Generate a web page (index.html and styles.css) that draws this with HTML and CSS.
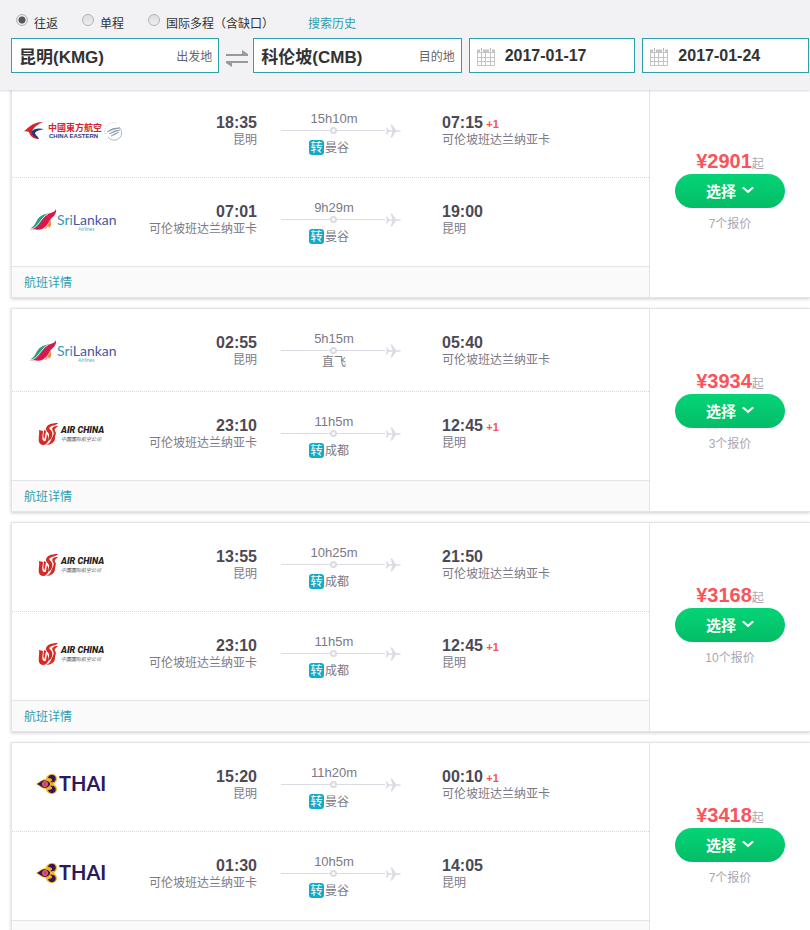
FILE: index.html
```
<!DOCTYPE html>
<html lang="zh-CN">
<head>
  <meta charset="UTF-8">
  <meta name="viewport" content="width=device-width, initial-scale=1.0">
  <title>昆明 - 科伦坡 机票</title>
  <link rel="stylesheet" href="styles.css">
</head>
<body>

  <!-- Shared icons and airline logos -->
  <svg class="sprite" aria-hidden="true">
    <symbol id="calendar" viewBox="0 0 18 18">
      <path d="M0 1.500H18V5H0Z" fill="#c4c4c4"/>
      <path d="M.5 4V17.500H17.500V4M0 9.500H18M0 13.500H18M4.500 5V18M8.500 5V18M13.500 5V18" fill="none" stroke="#c4c4c4"/>
      <path d="M3 0H6V4H3ZM12 0H15V4H12Z" fill="#fff"/>
      <path d="M4.500 0V3.500M13.500 0V3.500" stroke="#b4b4b4"/>
    </symbol>
    <symbol id="swap" viewBox="0 0 22 18">
      <path d="M0 5H16V1L22 5V7H0ZM22 14H6V18L0 14V12H22Z" fill="#999"/>
    </symbol>
    <symbol id="plane" viewBox="0 0 16 14">
      <path d="M1 3.500H2L4 6.200H7.500L5.500 .5H7L11 6.200H14Q16 6.200 16 7Q16 7.800 14 7.800H11L7 13.500H5.500L7.500 7.800H4L2 10.500H1L1.800 7Z" fill="#dcdae2"/>
    </symbol>
    <symbol id="chevron" viewBox="0 0 12 8">
      <path d="M1.500 2L6 5.800L10.500 2" fill="none" stroke="#fff" stroke-width="2.200" stroke-linecap="round"/>
    </symbol>

    <symbol id="china-eastern" viewBox="0 0 120 40">
      <path d="M11 21.500C15 20 19 12 31 12C26 14 22 17 20 21C21 25 24 27 27 29C21 29 18 26 17 22C15 21 13 21 11 21.500Z" fill="#d8232f"/>
      <path d="M32 19C27 18 22 18 19.500 21.500C20 25 23 28 27 29C26 26 23 25 23 23C25 20 29 20 32 19Z" fill="#1d3a80"/>
      <text class="ce-cn" x="36" y="21">中國東方航空</text>
      <text class="ce-en" x="37" y="28">CHINA EASTERN</text>
      <path d="M93 24A9 9 0 0 1 104 13" fill="none" stroke="#b8c2ce" stroke-dasharray="1 1.500"/>
      <path d="M96 27A7.500 7.500 0 1 0 107 17" fill="none" stroke="#a9b8c6"/>
      <path d="M95 22Q101 17 108 18Q101 19 95 22ZM97 24Q102 20 108 20Q102 22 97 24ZM99 26Q103 23 107 22Q103 25 99 26Z" fill="#8497a9" stroke="#8497a9" stroke-width=".5"/>
    </symbol>

    <symbol id="srilankan" viewBox="0 0 120 40">
      <path d="M14.500 31.500C24 30 26 23 31 18C35 14 43 14 44 10C45 16 40 18 38 21C35 27 31 32 24 30.500C21 30 18 31 14.500 31.500Z" fill="#d9184f"/>
      <path d="M18 29.500C24 27 24 20 29 17C32 15 35 15 37 14C30 19 29 26 23 29C21 30 20 29 18 29.500Z" fill="#2e9c7f"/>
      <path d="M18 30.500C27 28.500 28 19 36 15" fill="none" stroke="#fff" stroke-width=".8"/>
      <path d="M32 30C36 27 37 23 39 20C38 24 41 25 37 29C37 28 36 27 36 27C35 29 34 30 32 30Z" fill="#f08a3c"/>
      <text class="sl-name" x="45" y="26"><tspan fill="#3c93bf">Sri</tspan><tspan fill="#4a55a4">Lankan</tspan></text>
      <text class="sl-sub" x="66" y="32">Airlines</text>
    </symbol>

    <symbol id="air-china" viewBox="0 0 120 40">
      <g fill="#d62a24">
        <path d="M46 10C39 10 34 12 34 16C34 19 38 20 37 23L36 28C40 26 41 22 40 19C39 16 36 16 38 14C40 12 44 13 46 10Z"/>
        <path d="M46 13C41 13 39 15 41 18C43 21 40 24 39 27C38 30 36 31 34 32C39 32 43 29 43 25C43 22 45 20 43 18C42 16 44 15 46 13Z"/>
        <path d="M27 17L31 18C31 21 29 27 32 28C35 29 34 24 35 21C38 26 36 32 31 32C24 31 28 23 27 17Z"/>
        <path d="M32 17L34 18C34 21 32 24 33 26C30 25 32 21 32 17Z"/>
      </g>
      <text class="ac-en" x="49" y="20">AIR CHINA</text>
      <text class="ac-cn" x="49" y="28">中国国际航空公司</text>
    </symbol>

    <symbol id="thai" viewBox="0 0 120 40">
      <path d="M24 20C28 18 30 15 34 15C34 11 38 10 41 10C45 11 46 15 44 18L42 20L44 22C46 25 45 29 41 30C38 30 34 29 34 25C30 25 28 22 24 20Z" fill="#f0b51e"/>
      <path d="M25 20C29 18 31 15 35 17C39 18 39 22 35 23.500C31 25 29 22 25 20Z" fill="#3a1458"/>
      <path d="M36 14C37 10 42 10 43.500 13C45 18 40 19 38 18C41 17 41 14 36 14Z" fill="#3a1458"/>
      <path d="M36 26C37 30 42 30 43.500 27C45 22 40 21 38 22C41 23 41 26 36 26Z" fill="#3a1458"/>
      <circle cx="33" cy="20" r="2.600" fill="#d13a8c" stroke="#f0b51e" stroke-width=".6"/>
      <text class="th-name" x="47" y="27">THAI</text>
    </symbol>
  </svg>

  <form class="search">
    <div class="trip-types">
      <label><input type="radio" name="trip" checked> <span>往返</span></label>
      <label><input type="radio" name="trip"> <span>单程</span></label>
      <label><input type="radio" name="trip"> <span>国际多程（含缺口）</span></label>
      <a class="history" href="#">搜索历史</a>
    </div>
    <div class="fields">
      <div class="field place">
        <input type="text" id="from" value="昆明(KMG)">
        <label for="from">出发地</label>
      </div>
      <button type="button" class="swap" aria-label="交换"><svg><use href="#swap"/></svg></button>
      <div class="field place">
        <input type="text" id="to" value="科伦坡(CMB)">
        <label for="to">目的地</label>
      </div>
      <div class="field date">
        <label for="depart" aria-label="出发日期"><svg><use href="#calendar"/></svg></label>
        <input type="text" id="depart" value="2017-01-17">
      </div>
      <div class="field date">
        <label for="return" aria-label="返回日期"><svg><use href="#calendar"/></svg></label>
        <input type="text" id="return" value="2017-01-24">
      </div>
    </div>
  </form>

  <main class="results">
    <article class="card">
      <div class="flights">
        <div class="leg">
          <svg class="logo"><use href="#china-eastern"/></svg>
          <div class="depart"><strong>18:35</strong><p>昆明</p></div>
          <div class="route">
            <p>15h10m</p>
            <div class="track"><i></i><svg><use href="#plane"/></svg></div>
            <p class="stop"><b>转</b>曼谷</p>
          </div>
          <div class="arrive"><strong>07:15</strong> <em>+1</em><p>可伦坡班达兰纳亚卡</p></div>
        </div>
        <div class="leg">
          <svg class="logo"><use href="#srilankan"/></svg>
          <div class="depart"><strong>07:01</strong><p>可伦坡班达兰纳亚卡</p></div>
          <div class="route">
            <p>9h29m</p>
            <div class="track"><i></i><svg><use href="#plane"/></svg></div>
            <p class="stop"><b>转</b>曼谷</p>
          </div>
          <div class="arrive"><strong>19:00</strong><p>昆明</p></div>
        </div>
        <div class="details"><a href="#">航班详情</a></div>
      </div>
      <div class="offer">
        <p class="price"><strong>¥2901</strong>起</p>
        <button type="button" class="select">选择 <svg><use href="#chevron"/></svg></button>
        <p class="quotes">7个报价</p>
      </div>
    </article>

    <article class="card">
      <div class="flights">
        <div class="leg">
          <svg class="logo"><use href="#srilankan"/></svg>
          <div class="depart"><strong>02:55</strong><p>昆明</p></div>
          <div class="route">
            <p>5h15m</p>
            <div class="track"><i></i><svg><use href="#plane"/></svg></div>
            <p class="direct">直飞</p>
          </div>
          <div class="arrive"><strong>05:40</strong><p>可伦坡班达兰纳亚卡</p></div>
        </div>
        <div class="leg">
          <svg class="logo"><use href="#air-china"/></svg>
          <div class="depart"><strong>23:10</strong><p>可伦坡班达兰纳亚卡</p></div>
          <div class="route">
            <p>11h5m</p>
            <div class="track"><i></i><svg><use href="#plane"/></svg></div>
            <p class="stop"><b>转</b>成都</p>
          </div>
          <div class="arrive"><strong>12:45</strong> <em>+1</em><p>昆明</p></div>
        </div>
        <div class="details"><a href="#">航班详情</a></div>
      </div>
      <div class="offer">
        <p class="price"><strong>¥3934</strong>起</p>
        <button type="button" class="select">选择 <svg><use href="#chevron"/></svg></button>
        <p class="quotes">3个报价</p>
      </div>
    </article>

    <article class="card">
      <div class="flights">
        <div class="leg">
          <svg class="logo"><use href="#air-china"/></svg>
          <div class="depart"><strong>13:55</strong><p>昆明</p></div>
          <div class="route">
            <p>10h25m</p>
            <div class="track"><i></i><svg><use href="#plane"/></svg></div>
            <p class="stop"><b>转</b>成都</p>
          </div>
          <div class="arrive"><strong>21:50</strong><p>可伦坡班达兰纳亚卡</p></div>
        </div>
        <div class="leg">
          <svg class="logo"><use href="#air-china"/></svg>
          <div class="depart"><strong>23:10</strong><p>可伦坡班达兰纳亚卡</p></div>
          <div class="route">
            <p>11h5m</p>
            <div class="track"><i></i><svg><use href="#plane"/></svg></div>
            <p class="stop"><b>转</b>成都</p>
          </div>
          <div class="arrive"><strong>12:45</strong> <em>+1</em><p>昆明</p></div>
        </div>
        <div class="details"><a href="#">航班详情</a></div>
      </div>
      <div class="offer">
        <p class="price"><strong>¥3168</strong>起</p>
        <button type="button" class="select">选择 <svg><use href="#chevron"/></svg></button>
        <p class="quotes">10个报价</p>
      </div>
    </article>

    <article class="card">
      <div class="flights">
        <div class="leg">
          <svg class="logo"><use href="#thai"/></svg>
          <div class="depart"><strong>15:20</strong><p>昆明</p></div>
          <div class="route">
            <p>11h20m</p>
            <div class="track"><i></i><svg><use href="#plane"/></svg></div>
            <p class="stop"><b>转</b>曼谷</p>
          </div>
          <div class="arrive"><strong>00:10</strong> <em>+1</em><p>可伦坡班达兰纳亚卡</p></div>
        </div>
        <div class="leg">
          <svg class="logo"><use href="#thai"/></svg>
          <div class="depart"><strong>01:30</strong><p>可伦坡班达兰纳亚卡</p></div>
          <div class="route">
            <p>10h5m</p>
            <div class="track"><i></i><svg><use href="#plane"/></svg></div>
            <p class="stop"><b>转</b>曼谷</p>
          </div>
          <div class="arrive"><strong>14:05</strong><p>昆明</p></div>
        </div>
        <div class="details"><a href="#">航班详情</a></div>
      </div>
      <div class="offer">
        <p class="price"><strong>¥3418</strong>起</p>
        <button type="button" class="select">选择 <svg><use href="#chevron"/></svg></button>
        <p class="quotes">7个报价</p>
      </div>
    </article>
  </main>

</body>
</html>
```
FILE: styles.css
```
* {
  box-sizing: border-box;
}

html {
  scrollbar-width: none;
}

body {
  margin: 0;
  background-color: #fff;
  color: #7b7985;
  font-family: "Liberation Sans", "Noto Sans CJK SC", sans-serif;
  font-size: 12px;
  line-height: 16px;
}

p {
  margin: 0;
}

a {
  color: #2a9fae;
  text-decoration: none;
}

button,
input {
  font-family: inherit;
}

.sprite {
  display: none;
}

/* Search bar */
.search {
  position: sticky;
  top: 0;
  z-index: 1;
  padding: 13px 1px 17px 11px;
  background-color: #f2f2f4;
  box-shadow: 0 1px 2px rgba(60, 60, 90, 0.2);
}

.trip-types {
  display: flex;
  gap: 24px;
  padding-left: 5px;
  margin-bottom: 2px;
  line-height: 23px;
  color: #333;
}

.trip-types label {
  display: flex;
  gap: 6px;
}

.trip-types input {
  appearance: none;
  width: 12px;
  height: 12px;
  margin: 1px 0 0;
  border: 1px solid #b4b4b4;
  border-radius: 50%;
  background: linear-gradient(#dcdcdc, #efefef);
}

.trip-types input:checked {
  background: radial-gradient(circle, #555 0 3px, #e8e8e8 4px);
}

.history {
  margin-left: 10px;
}

.fields {
  display: grid;
  grid-template-columns: 5fr 20px 5fr 4fr 4fr;
  gap: 7px;
}

.field {
  display: flex;
  align-items: center;
  min-width: 0;
  height: 35px;
  padding: 0 6px 0 7px;
  border: 1px solid #2f9fab;
  background-color: #fff;
}

.field input {
  flex: 1;
  min-width: 0;
  padding: 0;
  border: none;
  outline: none;
  background: none;
  color: #333;
  font-size: 16px;
  font-weight: bold;
}

.field svg {
  display: block;
  width: 18px;
  height: 18px;
}

.place input {
  font-size: 17px;
}

.place label {
  padding-top: 2px;
  color: #666;
}

.date {
  gap: 10px;
}

.date label {
  padding-top: 2px;
}

.swap {
  padding: 4px 0 0;
  border: none;
  background: none;
  cursor: pointer;
}

.swap svg {
  display: block;
  width: 22px;
  height: 18px;
}

/* Flight cards */
.results {
  display: flex;
  flex-direction: column;
  gap: 10px;
  margin-top: -2px;
  padding-left: 11px;
}

.card {
  display: flex;
  border: 1px solid #e4e4e8;
  border-right: none;
  box-shadow: 0 1px 3px rgba(60, 60, 80, 0.25);
}

.flights {
  flex: 1;
  border-right: 1px solid #e4e4e8;
}

.leg {
  display: grid;
  grid-template-columns: 120px 125px 120px 1fr;
  padding: 21px 0;
}

.leg + .leg {
  border-top: 1px dotted #d6d6dc;
}

.logo {
  width: 120px;
  height: 40px;
}

.depart {
  text-align: right;
}

.depart,
.arrive {
  padding-top: 4px;
}

.leg strong {
  color: #4c4954;
  font-size: 16px;
  line-height: 18px;
}

.leg em {
  color: #f0555c;
  font-size: 11px;
  font-style: normal;
  font-weight: bold;
}

.route {
  margin-left: 24px;
  margin-right: -24px;
  font-size: 13px;
  line-height: 17px;
  text-align: center;
}

.route p {
  padding-right: 14px;
}

/* Flight line with the midpoint ring and the plane at its end */
.track {
  display: grid;
  grid-template: 7px / 1fr 16px;
  align-items: center;
}

.track::before {
  content: "";
  grid-area: 1 / 1;
  height: 1px;
  background-color: #dcdae2;
}

.track i {
  grid-area: 1 / 1;
  justify-self: center;
  width: 7px;
  height: 7px;
  border: 2px solid #dcdae2;
  border-radius: 50%;
  background-color: #fff;
}

.track svg {
  width: 16px;
  height: 14px;
}

.route .stop,
.route .direct {
  font-size: 12px;
  line-height: 16px;
}

.route .stop {
  display: flex;
  justify-content: center;
  gap: 1px;
  padding: 6px 24px 0 0;
}

.stop b {
  width: 15px;
  height: 15px;
  border-radius: 3px;
  background-color: #12abc8;
  color: #fff;
  font-weight: normal;
}

.arrive {
  padding-left: 65px;
}

.details {
  padding: 8px 12px 6px;
  border-top: 1px solid #e4e4e8;
  background-color: #fafafb;
}

/* Price column */
.offer {
  width: 160px;
  padding-top: 60px;
  text-align: center;
  color: #a9a7b3;
}

.price {
  height: 25px;
  line-height: 25px;
}

.price strong {
  color: #f9545b;
  font-size: 20px;
}

.select {
  display: flex;
  justify-content: center;
  align-items: center;
  gap: 6px;
  width: 110px;
  height: 34px;
  margin: 0 auto 8px;
  padding: 0 0 2px;
  border: none;
  border-radius: 17px;
  background: linear-gradient(#04d476, #04bd66);
  color: #fff;
  font-size: 15px;
  font-weight: bold;
  cursor: pointer;
}

.select svg {
  width: 12px;
  height: 8px;
}

/* Lettering in the logos */
.ce-cn {
  fill: #d8232f;
  font: bold 9px "Noto Sans CJK TC", sans-serif;
}

.ce-en {
  fill: #1d3a80;
  font: bold 6px "Liberation Sans", sans-serif;
}

.sl-name {
  font: 14px Lato, sans-serif;
}

.sl-sub {
  fill: #4fb3c4;
  font: 5px Lato, sans-serif;
}

.ac-en {
  fill: #222;
  font: italic 900 9px Roboto, sans-serif;
}

.ac-cn {
  fill: #555;
  font: italic 5px "Noto Sans CJK SC", sans-serif;
}

.th-name {
  fill: #2a1a5e;
  font: bold 20px Lato, sans-serif;
}
```
